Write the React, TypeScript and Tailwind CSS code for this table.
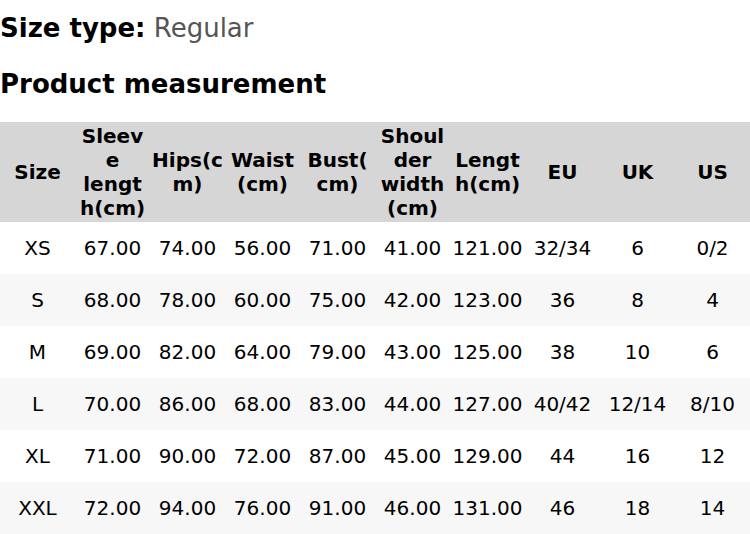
const headers = [
  'Size',
  'Sleeve length(cm)',
  'Hips(cm)',
  'Waist (cm)',
  'Bust(cm)',
  'Shoulder width (cm)',
  'Length(cm)',
  'EU',
  'UK',
  'US',
];

const rows = [
  ['XS', '67.00', '74.00', '56.00', '71.00', '41.00', '121.00', '32/34', '6', '0/2'],
  ['S', '68.00', '78.00', '60.00', '75.00', '42.00', '123.00', '36', '8', '4'],
  ['M', '69.00', '82.00', '64.00', '79.00', '43.00', '125.00', '38', '10', '6'],
  ['L', '70.00', '86.00', '68.00', '83.00', '44.00', '127.00', '40/42', '12/14', '8/10'],
  ['XL', '71.00', '90.00', '72.00', '87.00', '45.00', '129.00', '44', '16', '12'],
  ['XXL', '72.00', '94.00', '76.00', '91.00', '46.00', '131.00', '46', '18', '14'],
];

export default function App() {
  return (
    <div className="w-[750px] bg-white pt-[10px] text-black font-['DejaVu_Sans',sans-serif]">
      <p className="text-[26px] leading-[36px]">
        <span className="font-bold">Size type:</span>{' '}
        <span className="text-[#555555]">Regular</span>
      </p>
      <h2 className="mt-[20px] text-[26px] leading-[36px] font-bold">Product measurement</h2>

      <table className="mt-[20px] w-full table-fixed border-collapse text-[20px] leading-[24px]">
        <thead>
          <tr className="bg-[#d6d6d6]">
            {headers.map((h) => (
              <th key={h} className="px-[2px] py-[2px] text-center align-middle font-bold [overflow-wrap:anywhere]">
                {h}
              </th>
            ))}
          </tr>
        </thead>
        <tbody>
          {rows.map((r, i) => (
            <tr key={r[0]} className={i % 2 === 1 ? 'bg-[#f7f7f7]' : 'bg-white'}>
              {r.map((c, j) => (
                <td key={j} className="h-[52px] px-[2px] text-center align-middle whitespace-nowrap">
                  {c}
                </td>
              ))}
            </tr>
          ))}
        </tbody>
      </table>
    </div>
  );
}
